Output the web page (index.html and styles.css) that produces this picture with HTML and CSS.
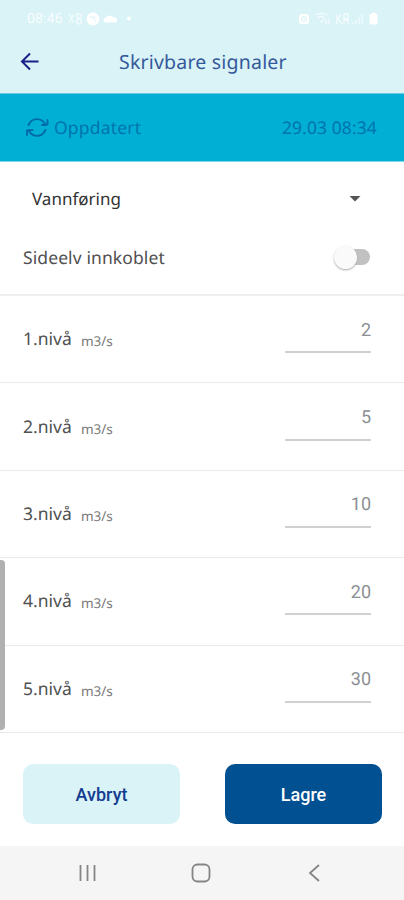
FILE: index.html
```html
<!DOCTYPE html>
<html lang="no">
<head>
<meta charset="utf-8">
<title>Skrivbare signaler</title>
<link rel="stylesheet" href="styles.css">
</head>
<body>
<div class="app">
  <header class="header">
    <div class="status">
      <span class="clock">08:46</span>
      <svg class="status-left" width="68" height="16" viewBox="0 0 68 16">
        <g fill="none" stroke="#fff" stroke-width="1.500" opacity=".65"><path d="M1 3l5 9M6 3l-5 9"/><circle cx="11" cy="5" r="2.200"/><circle cx="11" cy="10.500" r="2.500"/></g>
        <circle cx="25" cy="8" r="6.500" fill="#fff"/><path d="M21.500 6.500c2.500-1 5-.7 7.200.6M25 7l3 4" fill="none" stroke="#d9f3f7"/>
        <path d="M37 11.500a2.500 2.500 0 0 1 1-4.800 4.300 4.300 0 0 1 7.500-.2A2.600 2.600 0 0 1 47.500 11.500z" fill="#fff"/>
        <circle cx="61" cy="7.500" r="2" fill="#fff"/>
      </svg>
      <svg class="status-right" width="82" height="16" viewBox="0 0 82 16">
        <rect x="1" y="3" width="10" height="10" rx="2.500" fill="#fff"/><circle cx="6" cy="8" r="2.500" fill="none" stroke="#d9f3f7"/><path d="M6 6.500V8h1.500" fill="none" stroke="#d9f3f7"/>
        <g fill="none" stroke="#fff" stroke-width="1.300" opacity=".7"><path d="M17 4q6-3 12 0M19 7q4-3 8 0M22 10l2 1 2-3M28 8v5M31 8v5M39 3v10M43 3l-3 5 4 5M46 3v5h4V3zM46 13V9h4v4M55 13v-2M58 13V9M61 13V6M64 13V3"/></g>
        <path d="M73 3.500h1.500V2h3v1.500H79v9.500h-7V3.500z" fill="#fff" stroke="#fff" stroke-linejoin="round"/>
      </svg>
    </div>
    <div class="titlebar">
      <svg class="back" width="20" height="20" viewBox="0 0 20 20"><path d="M18.500 9.500H2.500M10 1.500l-8 8 8 8" fill="none" stroke="#1b2089" stroke-width="2"/></svg>
      <h1 class="title">Skrivbare signaler</h1>
    </div>
  </header>
  <div class="updated">
    <svg class="sync" width="24" height="22" viewBox="0 0 24 22"><g fill="none" stroke="#006aaa" stroke-width="1.900" stroke-linecap="round" stroke-linejoin="round"><path d="M3.500 8C7 .2 17 .2 20.500 8M17 8l5.500-.5V3M20.500 13c-3.500 7.800-13.500 7.800-17 0M7.500 13l-5.500.5V18"/></g></svg>
    <span class="updated-label">Oppdatert</span>
    <span class="updated-time">29.03 08:34</span>
  </div>
  <main class="content">
    <div class="select"><span class="select-value">Vannføring</span><svg width="12" height="6" viewBox="0 0 12 6"><path d="M.5 0h11L6 5.500z" fill="#555"/></svg></div>
    <div class="toggle-row"><span class="toggle-label">Sideelv innkoblet</span><span class="switch"><i class="knob"></i></span></div>
    <div class="row"><span class="level">1.nivå</span><span class="unit">m3/s</span><span class="field">2</span></div>
    <div class="row"><span class="level">2.nivå</span><span class="unit">m3/s</span><span class="field">5</span></div>
    <div class="row"><span class="level">3.nivå</span><span class="unit">m3/s</span><span class="field">10</span></div>
    <div class="row"><span class="level">4.nivå</span><span class="unit">m3/s</span><span class="field">20</span></div>
    <div class="row"><span class="level">5.nivå</span><span class="unit">m3/s</span><span class="field">30</span></div>
    <i class="edge-handle"></i>
  </main>
  <div class="actions"><button class="btn cancel">Avbryt</button><button class="btn save">Lagre</button></div>
  <nav class="nav">
    <svg width="20" height="20" viewBox="0 0 20 20"><path d="M2.500 2v16M9.500 2v16M16.500 2v16" stroke="#858585" stroke-width="1.800"/></svg>
    <svg width="20" height="20" viewBox="0 0 20 20"><rect x="1.500" y="1.500" width="17" height="17" rx="5" fill="none" stroke="#858585" stroke-width="1.800"/></svg>
    <svg width="20" height="20" viewBox="0 0 20 20"><path d="M15 2l-9 8 9 8" fill="none" stroke="#858585" stroke-width="1.800"/></svg>
  </nav>
</div>
</body>
</html>
```
FILE: styles.css
```css
* { box-sizing: border-box; }
body { margin: 0; background: #fff; font-family: "Noto Sans", "Open Sans", sans-serif; text-rendering: geometricPrecision; }
.app { width: 404px; height: 900px; display: flex; flex-direction: column; overflow: hidden; }
.header { height: 93px; background: #d9f3f7; flex: none; }
.status { height: 38px; display: flex; align-items: center; padding: 0 24px 0 27px; color: #fff; }
.clock { font: 14px Roboto, sans-serif; width: 37px; letter-spacing: .2px; opacity: .85; }
.status-left { margin-left: 4px; }
.status-right { margin-left: auto; }
.titlebar { height: 47px; display: flex; align-items: center; padding-left: 20px; }
.back { flex: none; }
.title { margin: 0 0 0 79px; font-size: 19.500px; font-weight: 400; color: #35599b; white-space: nowrap; letter-spacing: .2px; }
.updated { height: 69px; flex: none; display: flex; align-items: center; padding: 0 27px 0 25px; background: #00afd3; border-top: 1px solid #66cde1; border-bottom: 1px solid #80d7e9; color: #0074b0; font-size: 17.500px; }
.updated-label { margin-left: 5px; letter-spacing: .2px; }
.updated-time { margin-left: auto; letter-spacing: .1px; }
.content { position: relative; height: 571px; flex: none; color: #505050; }
.select { height: 73px; padding: 0 43px 0 32px; display: flex; align-items: center; justify-content: space-between; font-size: 17px; color: #333; }
.toggle-row { height: 61px; padding: 0 34px 14px 23px; display: flex; align-items: center; justify-content: space-between; border-bottom: 2px solid #eee; font-size: 17.500px; letter-spacing: .1px; }
.switch { width: 36px; height: 23px; display: flex; align-items: center; position: relative; }
.switch::before { content: ""; position: absolute; right: 0; top: 3px; width: 30px; height: 16px; border-radius: 8px; background: #c1c1c1; }
.knob { position: relative; width: 23px; height: 23px; border-radius: 50%; background: #fafafa; box-shadow: 0 1px 2px #aaa; }
.row { height: 87.4px; display: flex; align-items: center; padding: 0 33px 0 23px; border-bottom: 1.500px solid #eaeaea; }
.level { font-size: 17.500px; width: 58px; }
.unit { font-size: 13.500px; color: #777; padding-top: 4px; }
.field { margin-left: auto; width: 86px; height: 37px; margin-top: -9px; padding-top: 4.500px; border-bottom: 2px solid #d0d0d0; text-align: right; font: 18px/20px Roboto, sans-serif; color: #8b8f93; }
.edge-handle { position: absolute; left: 0; top: 398px; width: 5px; height: 170px; border-radius: 0 4px 4px 0; background: #b0b0b0; }
.actions { height: 113px; flex: none; display: flex; justify-content: space-between; padding: 31px 22px 0 23px; }
.btn { width: 157px; height: 60px; border: 0; padding: 0; border-radius: 10px; font: 500 18px Roboto, sans-serif; }
.cancel { background: #d9f3f7; color: #143c91; }
.save { background: #005092; color: #fff; }
.nav { height: 54px; flex: none; background: #f5f5f5; display: flex; align-items: center; justify-content: space-between; padding: 0 80px 0 78px; }
```
